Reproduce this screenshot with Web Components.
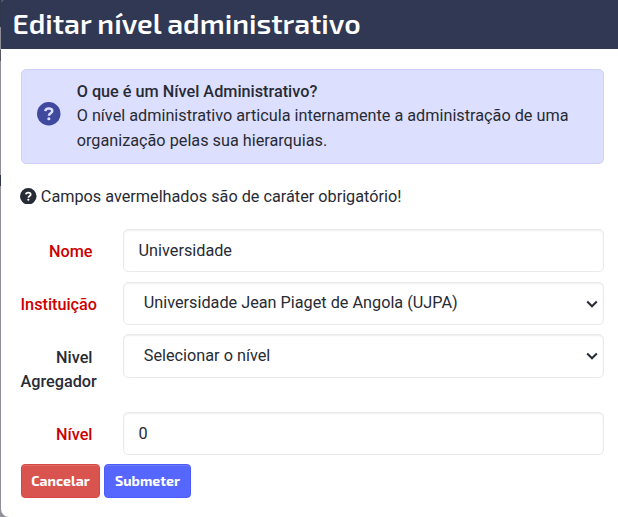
<!DOCTYPE html>
<html lang="pt">
<head>
<meta charset="utf-8">
<title>Editar nível administrativo</title>
<style>
  body {
    margin: 0;
    height: 517px;
    overflow: hidden;
    font-family: Roboto, "Liberation Sans", sans-serif;
    font-size: 16.24px;
    line-height: 24.4px;
    color: #272b35;
    background: linear-gradient(#30364c 0 27px, #8e8d95 27px 50px, #55565f 50px 61px, #929199 61px 175px, #30364c 175px 186px, #929199 186px);
  }
</style>
</head>
<body>
<modal-dialog>
  <span slot="title">Editar nível administrativo</span>
  <info-callout>
    <span slot="heading">O que é um Nível Administrativo?</span>
    O nível administrativo articula internamente a administração de uma organização pelas sua hierarquias.
  </info-callout>
  <form-note>Campos avermelhados são de caráter obrigatório!</form-note>
  <form-field label="Nome" required>Universidade</form-field>
  <form-field label="Instituição" required type="select">Universidade Jean Piaget de Angola (UJPA)</form-field>
  <form-field label="Nivel Agregador" type="select">Selecionar o nível</form-field>
  <form-field label="Nível" required>0</form-field>
  <action-button slot="footer" kind="danger">Cancelar</action-button>
  <action-button slot="footer" kind="primary">Submeter</action-button>
</modal-dialog>

<script>
class ModalDialog extends HTMLElement {
  constructor() {
    super();
    this.attachShadow({ mode: 'open' });
    this.shadowRoot.innerHTML = `
      <style>
        :host {
          display: flex;
          flex-direction: column;
          box-sizing: border-box;
          height: 517px;
          margin-left: 1px;
          background: white;
          border-radius: 3px 0 0 8px;
          overflow: hidden;
        }
        header {
          box-sizing: border-box;
          height: 49px;
          padding: 5px 11.5px 0;
          background: #303854;
          color: white;
          font: 600 28.35px/36px "Exo 2", "Noto Sans", sans-serif;
          white-space: nowrap;
        }
        .body {
          padding: 20px 14px 0 20px;
        }
        footer {
          display: flex;
          gap: 4px;
          padding: 9px 20px 0;
        }
      </style>
      <header><slot name="title"></slot></header>
      <div class="body"><slot></slot></div>
      <footer><slot name="footer"></slot></footer>
    `;
  }
}

class QuestionIcon extends HTMLElement {
  constructor() {
    super();
    this.attachShadow({ mode: 'open' });
    this.shadowRoot.innerHTML = `
      <style>
        :host { display: block; flex: none; width: 16px; height: 16px; }
        svg { display: block; width: 100%; height: 100%; }
      </style>
      <svg viewBox="0 0 24 24">
        <circle cx="12" cy="12" r="12" fill="currentColor"/>
        <path d="M8.5 9.3C8.7 7.4 10.2 6.7 12 6.7c2 0 3.6.8 3.6 2.6 0 2.3-3.4 2.2-3.4 4.7" fill="none" stroke="var(--mark, white)" stroke-width="2.5"/>
        <circle cx="12.1" cy="17.1" r="1.6" fill="var(--mark, white)"/>
      </svg>
    `;
  }
}

class InfoCallout extends HTMLElement {
  constructor() {
    super();
    this.attachShadow({ mode: 'open' });
    this.shadowRoot.innerHTML = `
      <style>
        :host {
          display: flex;
          align-items: center;
          gap: 16px;
          box-sizing: border-box;
          height: 95px;
          padding: 0 30px 0 15.2px;
          border: 1px solid #cdd1fb;
          border-radius: 5px;
          background: #dddfff;
        }
        question-icon {
          width: 23.5px;
          height: 23.5px;
          margin-top: -5px;
          color: #3f4a9f;
          --mark: #dddfff;
        }
        .heading { display: block; font-weight: 500; }
      </style>
      <question-icon></question-icon>
      <div class="text">
        <slot name="heading" class="heading"></slot>
        <slot></slot>
      </div>
    `;
  }
}

class FormNote extends HTMLElement {
  constructor() {
    super();
    this.attachShadow({ mode: 'open' });
    this.shadowRoot.innerHTML = `
      <style>
        :host { display: flex; align-items: flex-start; gap: 4px; height: 25px; margin: 20px 0 20px -0.7px; }
        question-icon { width: 16.5px; height: 16.5px; margin-top: 3.5px; }
        div { padding-top: 1px; }
      </style>
      <question-icon></question-icon>
      <div><slot></slot></div>
    `;
  }
}

class FormField extends HTMLElement {
  constructor() {
    super();
    this.attachShadow({ mode: 'open' });
    this.shadowRoot.innerHTML = `
      <style>
        :host {
          display: flex;
          align-items: flex-start;
          gap: 30.5px;
          margin-left: -0.5px;
          margin-bottom: 10px;
        }
        :host(:last-of-type) { margin-bottom: 0; }
        :host([label="Nivel Agregador"]) { height: 68px; margin-top: -1px; }
        :host([label="Nivel Agregador"]) .control { height: 44px; }
        :host([label="Nivel Agregador"]) .label { padding-top: 12px; line-height: 24px; }
        .label {
          flex: none;
          width: 72px;
          padding-top: 11px;
          font-weight: 500;
          text-align: right;
        }
        :host([required]) .label { color: #cc0000; }
        .control {
          flex: 1;
          display: flex;
          align-items: center;
          justify-content: space-between;
          box-sizing: border-box;
          height: 43px;
          padding: 0 6px 0 14.6px;
          border: 1px solid #e9eaed;
          border-radius: 5px;
          background: white;
          box-shadow: inset 0 1px 2px rgba(0, 0, 0, 0.07);
        }
        :host(:not([type="select"])) span { padding-top: 1px; }
        :host([type="select"]) .control { padding: 0 5.5px 0 19.8px; }
        svg { display: none; width: 12px; height: 8px; }
        :host([type="select"]) svg { display: block; }
      </style>
      <div class="label"></div>
      <div class="control">
        <span><slot></slot></span>
        <svg viewBox="0 0 12 8"><path d="M1.2 1.5 6 6.3l4.8-4.8" fill="none" stroke="#272b35" stroke-width="2"/></svg>
      </div>
    `;
  }

  connectedCallback() {
    this.shadowRoot.querySelector('.label').textContent = this.getAttribute('label');
  }
}

class ActionButton extends HTMLElement {
  constructor() {
    super();
    this.attachShadow({ mode: 'open' });
    this.shadowRoot.innerHTML = `
      <style>
        :host {
          display: flex;
          align-items: center;
          justify-content: center;
          box-sizing: border-box;
          width: 87px;
          height: 34px;
          border: 1px solid #4a5cff;
          border-radius: 4px;
          background: #5567ff;
          box-shadow: inset 0 1px 0 rgba(255, 255, 255, 0.15);
          color: white;
          font: 700 14.1px/20px "Exo 2", "Noto Sans", sans-serif;
        }
        :host([kind="danger"]) { width: 79px; background: #d9534f; border-color: #d64742; }
      </style>
      <slot></slot>
    `;
  }
}

customElements.define('modal-dialog', ModalDialog);
customElements.define('question-icon', QuestionIcon);
customElements.define('info-callout', InfoCallout);
customElements.define('form-note', FormNote);
customElements.define('form-field', FormField);
customElements.define('action-button', ActionButton);
</script>
</body>
</html>
